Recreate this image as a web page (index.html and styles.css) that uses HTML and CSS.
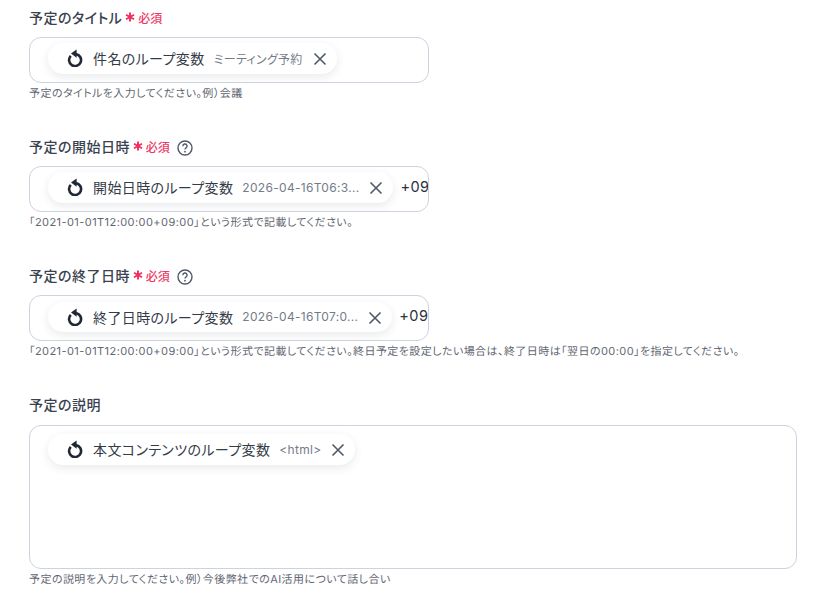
FILE: index.html
```html
<!DOCTYPE html>
<html lang="ja">
<head>
<meta charset="utf-8">
<title>予定</title>
<link rel="stylesheet" href="styles.css">
</head>
<body>
<svg class="defs" width="0" height="0" aria-hidden="true">
  <symbol id="loop" viewBox="0 0 18 18">
    <path d="M4.8 6.8 A6 6 0 1 0 10 5.1" fill="none" stroke="currentColor" stroke-width="2.6"/>
    <path d="M10.6 0.5 V8.7 L5 4.6 Z" fill="currentColor"/>
  </symbol>
  <symbol id="close" viewBox="0 0 14 14">
    <path d="M1.5 1.5 L12.5 12.5 M12.5 1.5 L1.5 12.5" fill="none" stroke="currentColor" stroke-width="1.6"/>
  </symbol>
  <symbol id="help" viewBox="0 0 16 16">
    <circle cx="8" cy="8" r="7" fill="none" stroke="currentColor" stroke-width="1.4"/>
    <path d="M5.9 6.3 A2.1 2.1 0 1 1 8.9 8 C8.2 8.4 8 8.8 8 9.6" fill="none" stroke="currentColor" stroke-width="1.4"/>
    <circle cx="8" cy="11.7" r="0.9" fill="currentColor"/>
  </symbol>
  <symbol id="star" viewBox="0 0 10 10">
    <path d="M5 0.5 V9.5 M1 2.7 L9 7.3 M9 2.7 L1 7.3" fill="none" stroke="currentColor" stroke-width="1.9"/>
  </symbol>
</svg>
<main class="form">
  <section class="field">
    <div class="label-row"><span class="label">予定のタイトル</span><svg class="star"><use href="#star"/></svg><span class="req">必須</span></div>
    <div class="box short">
      <div class="pill">
        <svg class="loop"><use href="#loop"/></svg>
        <span class="pill-name">件名のループ変数</span>
        <span class="pill-value">ミーティング予約</span>
        <svg class="close"><use href="#close"/></svg>
      </div>
    </div>
    <p class="hint">予定のタイトルを入力してください。例）会議</p>
  </section>
  <section class="field">
    <div class="label-row"><span class="label">予定の開始日時</span><svg class="star"><use href="#star"/></svg><span class="req">必須</span><svg class="help"><use href="#help"/></svg></div>
    <div class="box short">
      <div class="pill">
        <svg class="loop"><use href="#loop"/></svg>
        <span class="pill-name">開始日時のループ変数</span>
        <span class="pill-value">2026-04-16T06:3...</span>
        <svg class="close"><use href="#close"/></svg>
      </div>
      <span class="suffix">+09</span>
    </div>
    <p class="hint">「2021-01-01T12:00:00+09:00」という形式で記載してください。</p>
  </section>
  <section class="field">
    <div class="label-row"><span class="label">予定の終了日時</span><svg class="star"><use href="#star"/></svg><span class="req">必須</span><svg class="help"><use href="#help"/></svg></div>
    <div class="box short">
      <div class="pill pill-low">
        <svg class="loop"><use href="#loop"/></svg>
        <span class="pill-name">終了日時のループ変数</span>
        <span class="pill-value">2026-04-16T07:0...</span>
        <svg class="close"><use href="#close"/></svg>
      </div>
      <span class="suffix">+09</span>
    </div>
    <p class="hint">「2021-01-01T12:00:00+09:00」という形式で記載してください。終日予定を設定したい場合は、終了日時は「翌日の00:00」を指定してください。</p>
  </section>
  <section class="field">
    <div class="label-row label-row-last"><span class="label">予定の説明</span></div>
    <div class="box tall">
      <div class="pill">
        <svg class="loop"><use href="#loop"/></svg>
        <span class="pill-name">本文コンテンツのループ変数</span>
        <span class="pill-value">&lt;html&gt;</span>
        <svg class="close"><use href="#close"/></svg>
      </div>
    </div>
    <p class="hint">予定の説明を入力してください。例）今後弊社でのAI活用について話し合い</p>
  </section>
</main>
</body>
</html>
```
FILE: styles.css
```css
* { box-sizing: border-box; }
html, body { margin: 0; padding: 0; }
body {
  background: #fff;
  font-family: Inter, "Noto Sans CJK JP", sans-serif;
  font-feature-settings: "palt";
  letter-spacing: 0.03em;
  color: #283240;
  overflow: hidden;
  height: 595px;
}
.defs { position: absolute; }
.form {
  padding: 7px 36px 0 29px;
  display: flex;
  flex-direction: column;
  gap: 35px;
}
.field { display: flex; flex-direction: column; }
.label-row {
  height: 20px;
  display: flex;
  align-items: center;
  margin-bottom: 10px;
}
.label-row-last { margin-bottom: 11px; }
.label { font-size: 14px; font-weight: 500; color: #39414e; }
.star { width: 10px; height: 10px; color: #f02d5e; margin-left: 3px; flex: none; }
.req { color: #ee3a66; font-size: 12px; font-weight: 500; letter-spacing: 0; margin-left: 3px; }
.help { width: 16px; height: 16px; margin-left: 7px; margin-top: 4px; color: #50586a; flex: none; }
.box {
  border: 1px solid #ccd2de;
  border-radius: 12px;
  background: #fff;
  padding: 5px 0 0 18px;
  display: flex;
  align-items: flex-start;
  overflow: hidden;
}
.box.short { width: 400px; height: 46px; }
.box.tall { width: 768px; height: 144px; padding-top: 8px; }
.pill {
  display: flex;
  align-items: center;
  height: 31px;
  padding: 0 10px 1px 18px;
  border-radius: 16px;
  background: #fff;
  box-shadow: 0 3px 10px rgba(40, 50, 70, 0.10);
  flex: none;
}
.pill-low { margin-top: 1px; height: 30px; }
.loop { width: 18px; height: 18px; color: #202833; margin-right: 9px; flex: none; }
.pill-name { font-size: 14px; letter-spacing: 0.028em; color: #333b47; white-space: nowrap; }
.pill-value { font-size: 12px; letter-spacing: 0.025em; color: #747c88; margin-left: 9px; white-space: nowrap; }
.close { width: 14px; height: 14px; margin-left: 10px; margin-top: 2px; color: #505866; flex: none; }
.suffix { font-size: 14.5px; color: #283240; margin-left: 7px; padding-top: 6px; white-space: nowrap; }
.hint { margin: 3px 0 0; font-size: 11px; letter-spacing: 0.0395em; text-rendering: geometricPrecision; line-height: 15px; color: #5f6672; white-space: nowrap; }
```
